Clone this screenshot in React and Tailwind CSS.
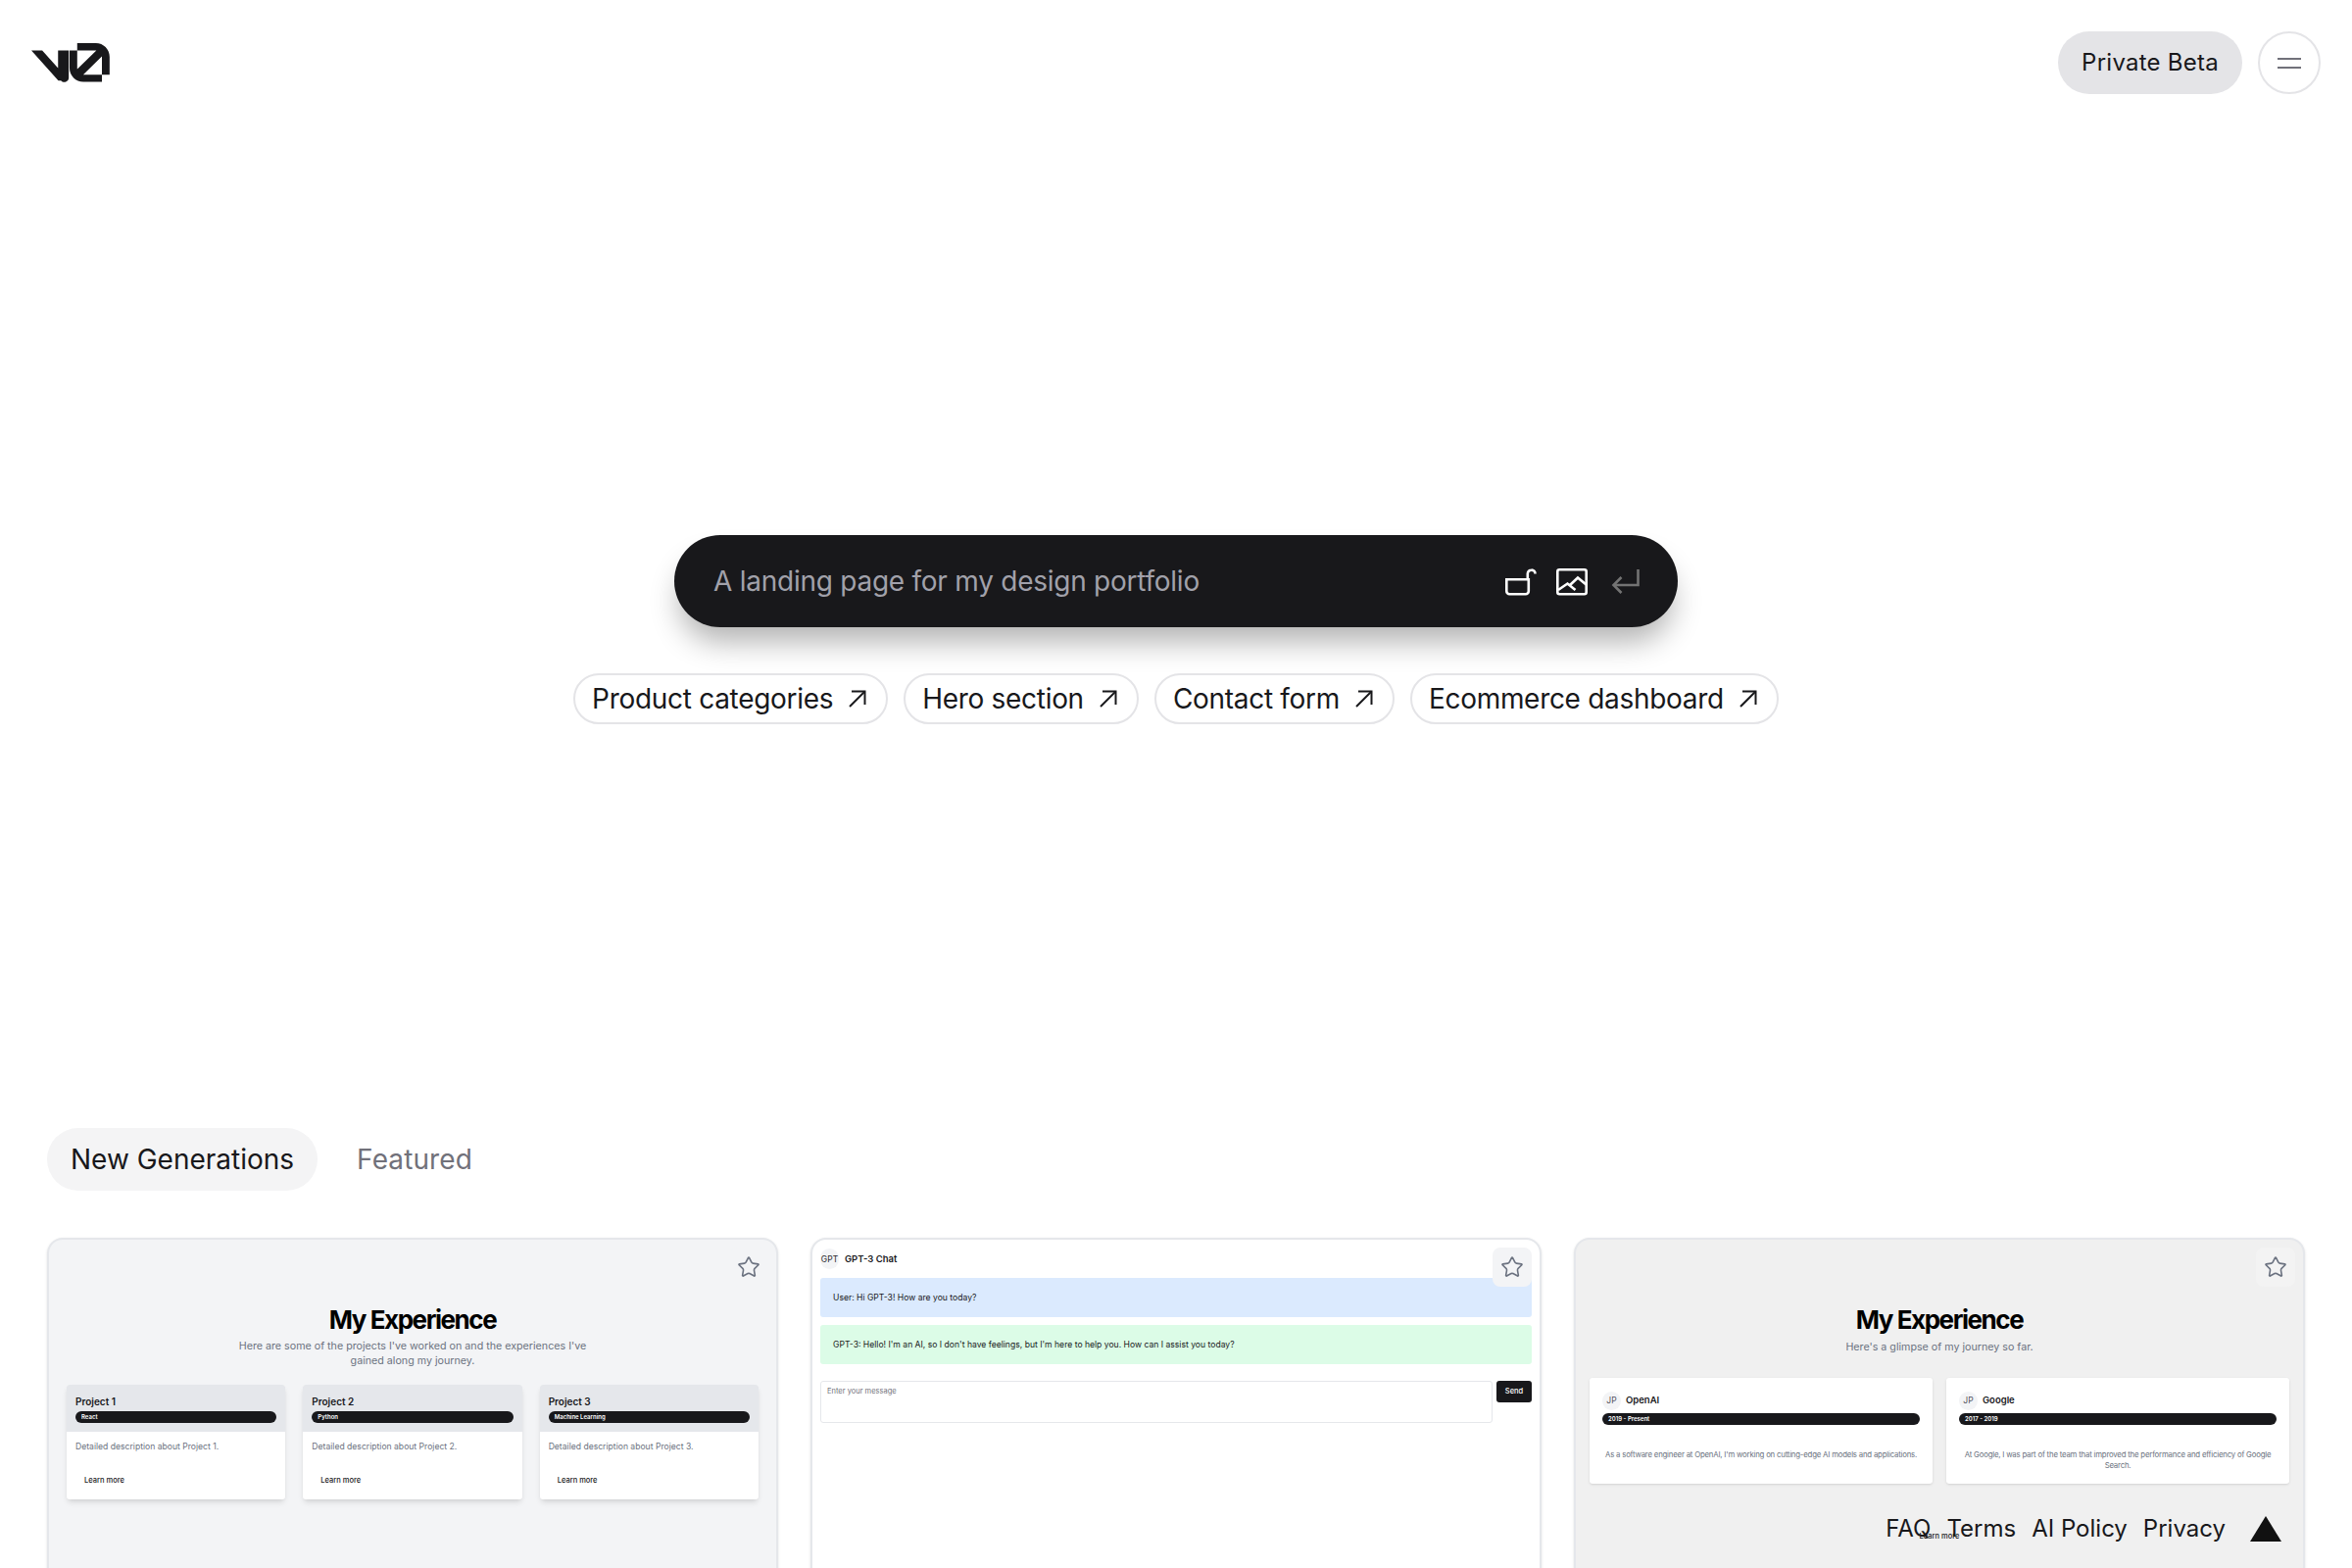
import { Star } from "lucide-react";

const chips = ["Product categories", "Hero section", "Contact form", "Ecommerce dashboard"];

const projects = [
  { name: "Project 1", tag: "React" },
  { name: "Project 2", tag: "Python" },
  { name: "Project 3", tag: "Machine Learning" },
];

const jobs = [
  {
    name: "OpenAI",
    years: "2019 - Present",
    text: "As a software engineer at OpenAI, I'm working on cutting-edge AI models and applications.",
  },
  {
    name: "Google",
    years: "2017 - 2019",
    text: "At Google, I was part of the team that improved the performance and efficiency of Google Search.",
  },
];

const Logo = () => (
  <svg viewBox="0 0 40 20" className="w-20 h-10 fill-[#18181b]">
    <path d="M23.3919 0H32.9188C36.7819 0 39.9136 3.13165 39.9136 6.99475V16.0805H36.0006V6.99475C36.0006 6.90167 35.9969 6.80925 35.9898 6.71766L26.4628 16.079C26.4949 16.08 26.5272 16.0805 26.5595 16.0805H36.0006V19.7762H26.5595C22.6964 19.7762 19.4788 16.6139 19.4788 12.7508V3.68923H23.3919V12.7508C23.3919 12.9253 23.4054 13.0977 23.4316 13.2668L33.1682 3.6995C33.0861 3.6927 33.003 3.68923 32.9188 3.68923H23.3919V0Z" />
    <path d="M13.7688 19.0956L0 3.68759H5.53933L13.6231 12.7337V3.68759H19.0715V17.5746C19.0715 19.6705 16.5018 20.6403 15.1232 19.0956Z" />
  </svg>
);

const LockIcon = () => (
  <svg viewBox="0 0 32 30" className="w-8 h-[30px] fill-none stroke-white stroke-[2.6]">
    <path d="M1.3 13.3h22.5v12a3 3 0 0 1-3 3H4.3a3 3 0 0 1-3-3z" />
    <path d="M22.8 13.3V7.5a3.9 3.9 0 0 1 3.9-3.9a3.7 3.7 0 0 1 3.8 3.9" />
  </svg>
);

const ImageIcon = () => (
  <svg viewBox="0 0 32 30" className="w-8 h-[30px] fill-none stroke-white stroke-[2.6]">
    <rect x="1.3" y="3.3" width="29.4" height="25" rx="2" />
    <path d="M2 24l9.5-6.5 8 6.5" />
    <path d="M14 19l8-7.5 8.5 7" />
  </svg>
);

const ReturnIcon = () => (
  <svg viewBox="0 0 30 26" className="w-[30px] h-[26px] fill-none stroke-[#737373] stroke-[2.6]">
    <path d="M27.5 1v16H3" />
    <path d="M10.5 9L2.5 17l8 8" />
  </svg>
);

const ChipArrow = () => (
  <svg viewBox="0 0 18 18" className="w-[18px] h-[18px] fill-none stroke-[#18181b] stroke-2">
    <path d="M1 17L16.5 1.5" />
    <path d="M3 1.5h13.5V15" />
  </svg>
);

const StarButton = ({ className }) => (
  <button className={`absolute top-[8px] right-[8px] w-10 h-10 rounded-lg flex items-center justify-center ${className}`}>
    <Star className="w-6 h-6 text-[#6b7280]" strokeWidth={1.6} />
  </button>
);

const Badge = ({ children }) => (
  <div className="h-3 rounded-full bg-[#18181b] text-white text-[6px] leading-3 font-semibold px-[6px] text-left">{children}</div>
);

const ProjectsCard = () => (
  <div className="relative h-[500px] rounded-2xl border-2 border-[#e5e7eb] bg-[#f3f4f6] shadow-sm overflow-hidden">
    <StarButton className="bg-[#f3f4f6]" />
    <div className="pt-[66px] px-[18px] text-center">
      <h3 className="text-[26px] leading-8 font-bold tracking-[-1.45px] text-black">My Experience</h3>
      <p className="mt-[3px] mx-auto w-[380px] text-[10.7px] leading-[15px] text-[#6b7280]">
        Here are some of the projects I've worked on and the experiences I've gained along my journey.
      </p>
      <div className="mt-[17px] grid grid-cols-3 gap-[18px] text-left">
        {projects.map((p) => (
          <div key={p.name} className="h-[117px] rounded-[3px] bg-white shadow-md overflow-hidden">
            <div className="h-[48px] bg-[#e5e7eb] px-[9px] pt-[10px]">
              <div className="text-[10px] leading-[14px] font-semibold text-[#18181b]">{p.name}</div>
              <div className="mt-[3px]">
                <Badge>{p.tag}</Badge>
              </div>
            </div>
            <p className="px-[9px] pt-[9px] text-[8.6px] leading-3 text-[#6b7280]">Detailed description about {p.name}.</p>
            <div className="pl-[18px] pt-[23px] text-[7.5px] leading-3 font-medium text-[#18181b]">Learn more</div>
          </div>
        ))}
      </div>
    </div>
  </div>
);

const ChatCard = () => (
  <div className="relative h-[500px] rounded-2xl border-2 border-[#e5e7eb] bg-white shadow-sm overflow-hidden">
    <StarButton className="bg-[#f3f4f6]" />
    <div className="px-2 pt-[9px]">
      <div className="flex items-center gap-[6px] h-[21px]">
        <div className="w-[19px] h-[21px] rounded-full bg-[#f3f4f6] text-[8.5px] leading-[23px] text-center text-[#27272a]">GPT</div>
        <div className="pt-[2px] text-[9.5px] font-semibold text-[#18181b]">GPT-3 Chat</div>
      </div>
      <div className="mt-[9px] h-10 rounded-[3px] bg-[#dbeafe] px-[13px] text-[8.6px] leading-10 text-[#18181b]">
        User: Hi GPT-3! How are you today?
      </div>
      <div className="mt-2 h-10 rounded-[3px] bg-[#dcfce7] px-[13px] text-[8.6px] leading-10 text-[#18181b]">
        GPT-3: Hello! I'm an AI, so I don't have feelings, but I'm here to help you. How can I assist you today?
      </div>
      <div className="mt-[17px] flex gap-1 items-start">
        <div className="flex-1 h-[43px] rounded-[3px] border border-[#e5e7eb] px-[6px] py-[4px] text-[7.5px] leading-[12px] text-[#71717a]">
          Enter your message
        </div>
        <div className="w-9 h-[22px] rounded-[3px] bg-[#18181b] text-white text-[7.5px] leading-[22px] text-center font-medium">Send</div>
      </div>
    </div>
  </div>
);

const JobsCard = () => (
  <div className="relative h-[500px] rounded-2xl border-2 border-[#e5e7eb] bg-[#f0f0f0] shadow-sm overflow-hidden">
    <StarButton className="bg-[#f3f3f3]" />
    <div className="pt-[66px] px-[14px] text-center">
      <h3 className="text-[26px] leading-8 font-bold tracking-[-1.45px] text-black">My Experience</h3>
      <p className="mt-[4px] text-[10.7px] leading-[15px] text-[#6b7280]">Here's a glimpse of my journey so far.</p>
      <div className="mt-[24px] grid grid-cols-2 gap-[14px]">
        {jobs.map((j) => (
          <div key={j.name} className="h-[108px] rounded-[3px] bg-white shadow-sm px-[13px] pt-[14px]">
            <div className="flex items-center gap-[5px] h-[19px]">
              <div className="w-[19px] h-[19px] rounded-full bg-[#f3f4f6] text-[8.5px] leading-[19px] text-[#52525b]">JP</div>
              <div className="text-[9.5px] font-semibold text-[#18181b]">{j.name}</div>
            </div>
            <div className="mt-[3px]">
              <Badge>{j.years}</Badge>
            </div>
            <p className="mt-[25px] text-[7.8px] leading-[11px] tracking-[-0.2px] text-[#6b7280]">{j.text}</p>
          </div>
        ))}
      </div>
      <div className="mt-[48px] text-[7.5px] leading-3 font-medium text-[#18181b]">Learn more</div>
    </div>
  </div>
);

export default function App() {
  return (
    <div className="relative h-[1600px] overflow-hidden bg-white font-['Inter',sans-serif]">
      {/* Header */}
      <header className="flex items-center justify-between px-8 pt-8">
        <Logo />
        <div className="flex items-center gap-4">
          <div className="h-16 rounded-full bg-[#e4e4e7] px-6 text-[24px] leading-16 tracking-[0.25px] text-[#18181b]">Private Beta</div>
          <button className="w-16 h-16 rounded-full border-2 border-[#e4e4e7] flex flex-col items-center justify-center gap-[7px]">
            <span className="w-6 h-[2px] bg-[#71717a]" />
            <span className="w-6 h-[2px] bg-[#71717a]" />
          </button>
        </div>
      </header>

      {/* Prompt */}
      <section className="pt-[450px] flex flex-col items-center">
        <div className="w-[1024px] h-[94px] rounded-[47px] bg-[#18181b] shadow-[0_20px_30px_-5px_rgba(0,0,0,0.3)] flex items-center pl-10 pr-[38px]">
          <div className="flex-1 text-[28px] tracking-[-0.25px] text-[#a1a1aa]">A landing page for my design portfolio</div>
          <div className="flex items-center gap-5">
            <LockIcon />
            <ImageIcon />
            <div className="ml-1">
              <ReturnIcon />
            </div>
          </div>
        </div>
        <div className="mt-[47px] flex gap-4">
          {chips.map((c) => (
            <div key={c} className="h-[52px] rounded-full border-2 border-[#e4e4e7] pl-[17px] pr-[20px] flex items-center gap-[16px] text-[28px] tracking-[-0.3px] text-[#18181b]">
              {c}
              <ChipArrow />
            </div>
          ))}
        </div>
      </section>

      {/* Tabs */}
      <nav className="mt-[412px] px-12 flex items-center gap-10 text-[28px]">
        <div className="h-16 rounded-full bg-[#f4f4f5] px-6 leading-16 text-[#18181b]">New Generations</div>
        <div className="leading-16 tracking-[0.1px] text-[#71717a]">Featured</div>
      </nav>

      {/* Generations */}
      <div className="mt-12 px-12 grid grid-cols-3 gap-[33px]">
        <ProjectsCard />
        <ChatCard />
        <JobsCard />
      </div>

      {/* Footer links */}
      <footer className="absolute right-[72px] top-[1544px] flex items-center gap-4 text-[24px] leading-8 text-[#18181b]">
        <span>FAQ</span>
        <span>Terms</span>
        <span>AI Policy</span>
        <span>Privacy</span>
        <svg viewBox="0 0 32 26" className="ml-[9px] w-8 h-[26px] fill-[#111]">
          <path d="M16 0L32 26H0z" />
        </svg>
      </footer>
    </div>
  );
}
